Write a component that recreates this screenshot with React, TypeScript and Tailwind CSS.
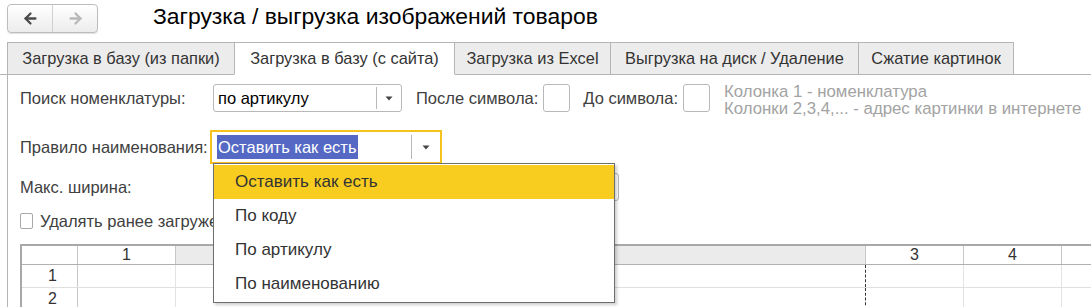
import { ArrowLeft, ArrowRight } from 'lucide-react'

const tabs = [
  { label: 'Загрузка в базу (из папки)', w: 'w-[228px]' },
  { label: 'Загрузка в базу (с сайта)', w: 'w-[221px]', active: true },
  { label: 'Загрузка из Excel', w: 'w-[157px]' },
  { label: 'Выгрузка на диск / Удаление', w: 'w-[249px]' },
  { label: 'Сжатие картинок', w: 'w-[156px]' },
]

const options = ['Оставить как есть', 'По коду', 'По артикулу', 'По наименованию']

function Caret() {
  return (
    <svg width="8" height="5" viewBox="0 0 8 5">
      <path d="M0.5 0.5h7L4 4.5z" fill="#444" />
    </svg>
  )
}

export default function App() {
  return (
    <div className="relative w-[1091px] h-[307px] overflow-hidden bg-white text-[#404040]" style={{ fontFamily: '"Liberation Sans", Arial, sans-serif' }}>
      {/* header */}
      <div className="flex items-center h-[36px] pl-[7px]">
        <div className="flex h-[29px] w-[91px] rounded-[4px] border border-[#bdbdbd] bg-gradient-to-b from-white to-[#ececec] shadow-[0_1px_1px_rgba(0,0,0,0.12)]">
          <div className="flex-1 flex items-center justify-center border-r border-[#d0d0d0]">
            <ArrowLeft size={17} strokeWidth={3.2} className="text-[#4a4a4a]" />
          </div>
          <div className="flex-1 flex items-center justify-center">
            <ArrowRight size={17} strokeWidth={3.2} className="text-[#b8b8b8]" />
          </div>
        </div>
        <div className="ml-[55px] text-[22.9px] text-black leading-none -mt-[3px]">Загрузка / выгрузка изображений товаров</div>
      </div>

      {/* tabs */}
      <div className="flex mt-[6px] h-[33px] border-b border-[#b5b5b5] pl-[7px]">
        {tabs.map((t) => (
          <div
            key={t.label}
            className={`${t.w} -ml-px first:ml-0 flex items-center justify-center text-[16.4px] border border-[#b5b5b5] ${
              t.active ? 'bg-white border-b-white h-[33px] relative z-10 text-[#333]' : 'bg-[#ececec] border-b-0 text-[#333]'
            }`}
          >
            {t.label}
          </div>
        ))}
      </div>

      {/* content */}
      <div className="ml-[7px] border-l border-[#b5b5b5] pl-[12px] pt-[9px] h-[240px] text-[16.5px]">
        <div className="flex items-center h-[28px]">
          <div className="w-[193px] whitespace-nowrap">Поиск номенклатуры:</div>
          <div className="flex h-[28px] w-[189px] border border-[#b8b8b8] rounded-[3px] bg-white">
            <div className="flex-1 flex items-center pl-[4px] text-black">по артикулу</div>
            <div className="w-[25px] border-l border-[#b8b8b8] my-[2px] flex items-center justify-center"><Caret /></div>
          </div>
          <div className="ml-[14px] whitespace-nowrap">После символа:</div>
          <div className="ml-[5px] w-[27px] h-[28px] border border-[#b8b8b8] rounded-[3px]" />
          <div className="ml-[13px] whitespace-nowrap">До символа:</div>
          <div className="ml-[5px] w-[27px] h-[28px] border border-[#b8b8b8] rounded-[3px]" />
          <div className="ml-[14px] text-[#a3a3a3] text-[16.8px] leading-[17px] mt-[4px] whitespace-nowrap">
            <div>Колонка 1 - номенклатура</div>
            <div>Колонки 2,3,4,... - адрес картинки в интернете</div>
          </div>
        </div>

        <div className="flex items-center mt-[18px] h-[34px]">
          <div className="w-[190px] whitespace-nowrap">Правило наименования:</div>
          <div className="flex h-[34px] w-[232px] border-2 border-[#f6c21c] bg-white">
            <div className="flex-1 flex items-center pl-[5px]">
              <span className="bg-[#5468c4] text-white px-px whitespace-nowrap">Оставить как есть</span>
            </div>
            <div className="w-[29px] border-l border-[#b8b8b8] my-[3px] flex items-center justify-center"><Caret /></div>
          </div>
        </div>

        <div className="flex items-center mt-[9px] h-[28px]">
          <div className="w-[193px]">Макс. ширина:</div>
          <div className="h-[28px] w-[406px] border border-[#b8b8b8] rounded-[3px]" />
        </div>

        <div className="flex items-center mt-[11px] h-[18px]">
          <div className="w-[13px] h-[16px] border border-[#a8a8a8] rounded-[2px]" />
          <div className="ml-[7px] w-[173px] overflow-hidden whitespace-nowrap">Удалять ранее загруженные</div>
        </div>

        {/* spreadsheet */}
        <div className="mt-[14px] border-t-2 border-l-2 border-[#a8a8a8] text-[16px] text-[#333]">
          <div className="flex h-[19px] border-b border-[#b0b0b0]">
            <div className="w-[56px] border-r border-[#c8c8c8]" />
            <div className="w-[98px] border-r border-[#c8c8c8] flex items-center justify-center">1</div>
            <div className="w-[690px] border-r border-[#c8c8c8] bg-[#ebebeb]" />
            <div className="w-[98px] border-r border-[#c8c8c8] flex items-center justify-center">3</div>
            <div className="w-[98px] border-r border-[#c8c8c8] flex items-center justify-center">4</div>
            <div className="flex-1" />
          </div>
          {['1', '2'].map((r) => (
            <div key={r} className="flex h-[23px] border-b border-[#e0e0e0]">
              <div className="w-[56px] border-r border-[#c8c8c8] flex items-center justify-end pr-[20px]">{r}</div>
              <div className="w-[98px] border-r border-[#e3e3e3]" />
              <div className="w-[690px] border-r border-dashed border-[#333]" />
              <div className="w-[98px] border-r border-[#e3e3e3]" />
              <div className="w-[98px] border-r border-[#e3e3e3]" />
              <div className="flex-1" />
            </div>
          ))}
        </div>
      </div>

      {/* dropdown list */}
      <div className="absolute left-[213px] top-[163px] w-[402px] h-[140px] bg-white border border-[#6e6e6e] shadow-[2px_2px_3px_rgba(0,0,0,0.2)] pt-[1px] text-[17px] text-[#333]">
        {options.map((o, i) => (
          <div key={o} className={`h-[34px] flex items-center pl-[21px] ${i === 0 ? 'bg-[#f8cd1f]' : ''}`}>{o}</div>
        ))}
      </div>
    </div>
  )
}
